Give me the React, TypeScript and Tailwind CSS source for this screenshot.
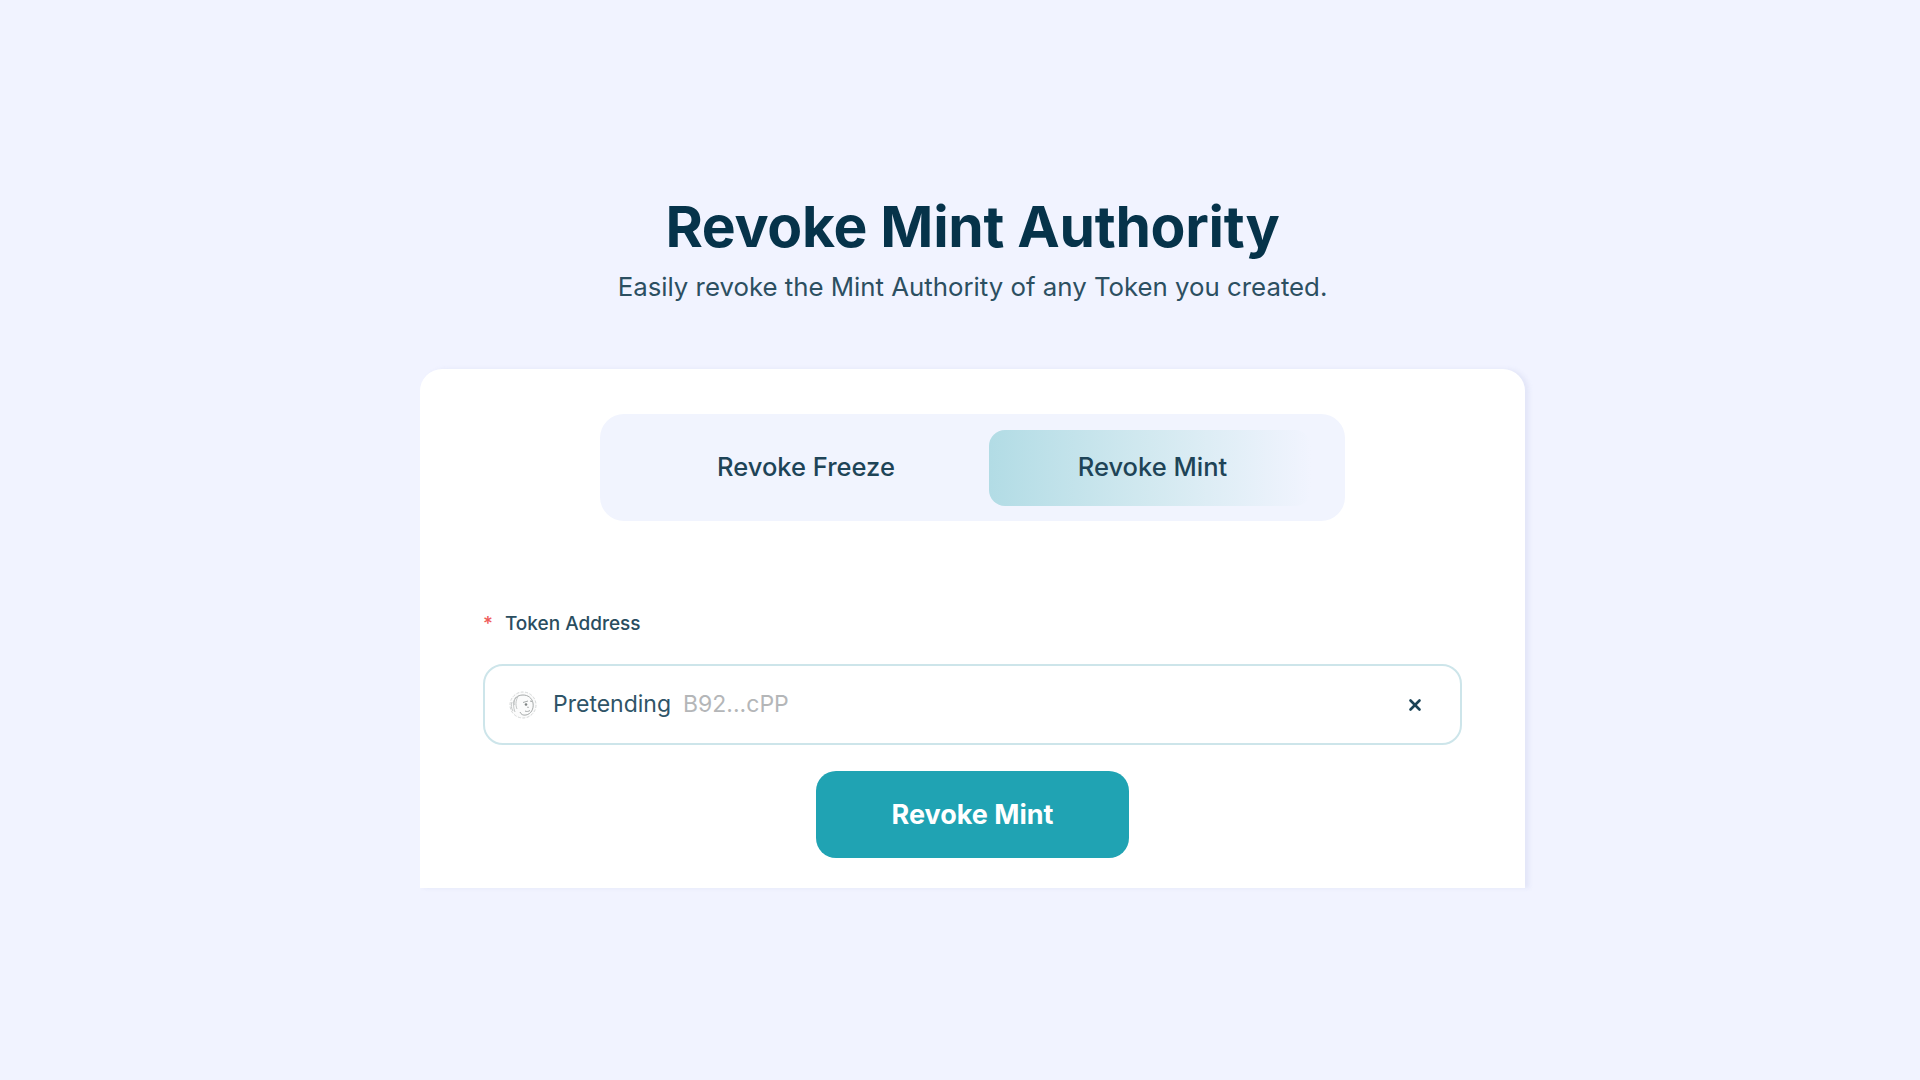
import { X } from "lucide-react";

function TokenIcon() {
  return (
    <svg viewBox="0 0 30 30" className="h-[30px] w-[30px]" fill="none" stroke="#a6aaaa" strokeWidth="1">
      <circle cx="15" cy="15" r="13" fill="#fbfbfb" stroke="#d6d8d8" strokeDasharray="3 1.500" />
      <path d="M6 15c-1-6 3-10 9-10 5 0 9 3 10 8 1 6-2 11-7 12-3 .6-5-.6-6-3" />
      <path d="M8 7c-3 4-3 10-1 15M11 5c-3 4-4 9-2 14M4 12c-1 3-1 6 1 9" stroke="#c4c7c7" />
      <path d="M15 12.500l5-1.500M22 11l2 .5M19 17c.7.5 1.500.5 2 0M17 21c1.500.8 3.500.6 5-.5" />
      <circle cx="18" cy="14.500" r="1.300" fill="#7d8282" stroke="none" />
    </svg>
  );
}

export default function App() {
  return (
    <div className="min-h-screen bg-[#f1f3ff] pl-[25px] pt-[197px] font-['Inter',sans-serif] text-[#0e3a4f]">
      <div className="flex flex-col items-center">
        <h1 className="text-[57px] font-bold leading-[60px] tracking-[-0.3px] text-[#06334a]">Revoke Mint Authority</h1>
        <p className="mt-[12px] text-[25.800px] leading-[36px] text-[#2c4f61]">Easily revoke the Mint Authority of any Token you created.</p>

        <div className="mt-[64px] flex h-[519px] w-[1105px] flex-col items-center rounded-t-[22px] bg-white px-[63px] pt-[45px] shadow-[4px_0_4px_rgba(210,214,240,0.45)]">
          <div className="flex h-[107px] w-[745px] items-center rounded-[24px] bg-[#f1f4fe] pl-[27px] text-[25.500px] font-[550] text-[#1e4457]">
            <button className="flex h-[76px] w-[358px] items-center justify-center">Revoke Freeze</button>
            <button className="ml-[4px] flex h-[76px] w-[322px] items-center justify-center rounded-[16px] bg-gradient-to-r from-[#b2dce5] via-[#d2e9f0] via-50% to-[#f1f4fe] pl-[5px]">Revoke Mint</button>
          </div>

          <div className="mt-[91px] flex w-full items-center gap-[12px] text-[19px] font-medium leading-[24px] text-[#2a4d5f]">
            <span className="text-[#ef5b5b]">*</span>
            <span>Token Address</span>
          </div>

          <div className="mt-[28px] flex h-[81px] w-full items-center rounded-[20px] border-2 border-[#cde5ea] pl-[23px] pr-[36px]">
            <TokenIcon />
            <span className="ml-[15px] text-[23px] text-[#2f5467]">Pretending</span>
            <span className="ml-[12px] text-[23px] text-[#b4b6b8]">B92...cPP</span>
            <X className="ml-auto h-[18px] w-[18px] text-[#1b4356]" strokeWidth={3.5} />
          </div>

          <button className="mt-[26px] h-[87px] w-[313px] rounded-[20px] bg-[#20a3b3] pt-[2px] text-[27px] font-bold text-white">Revoke Mint</button>
        </div>
      </div>
    </div>
  );
}
